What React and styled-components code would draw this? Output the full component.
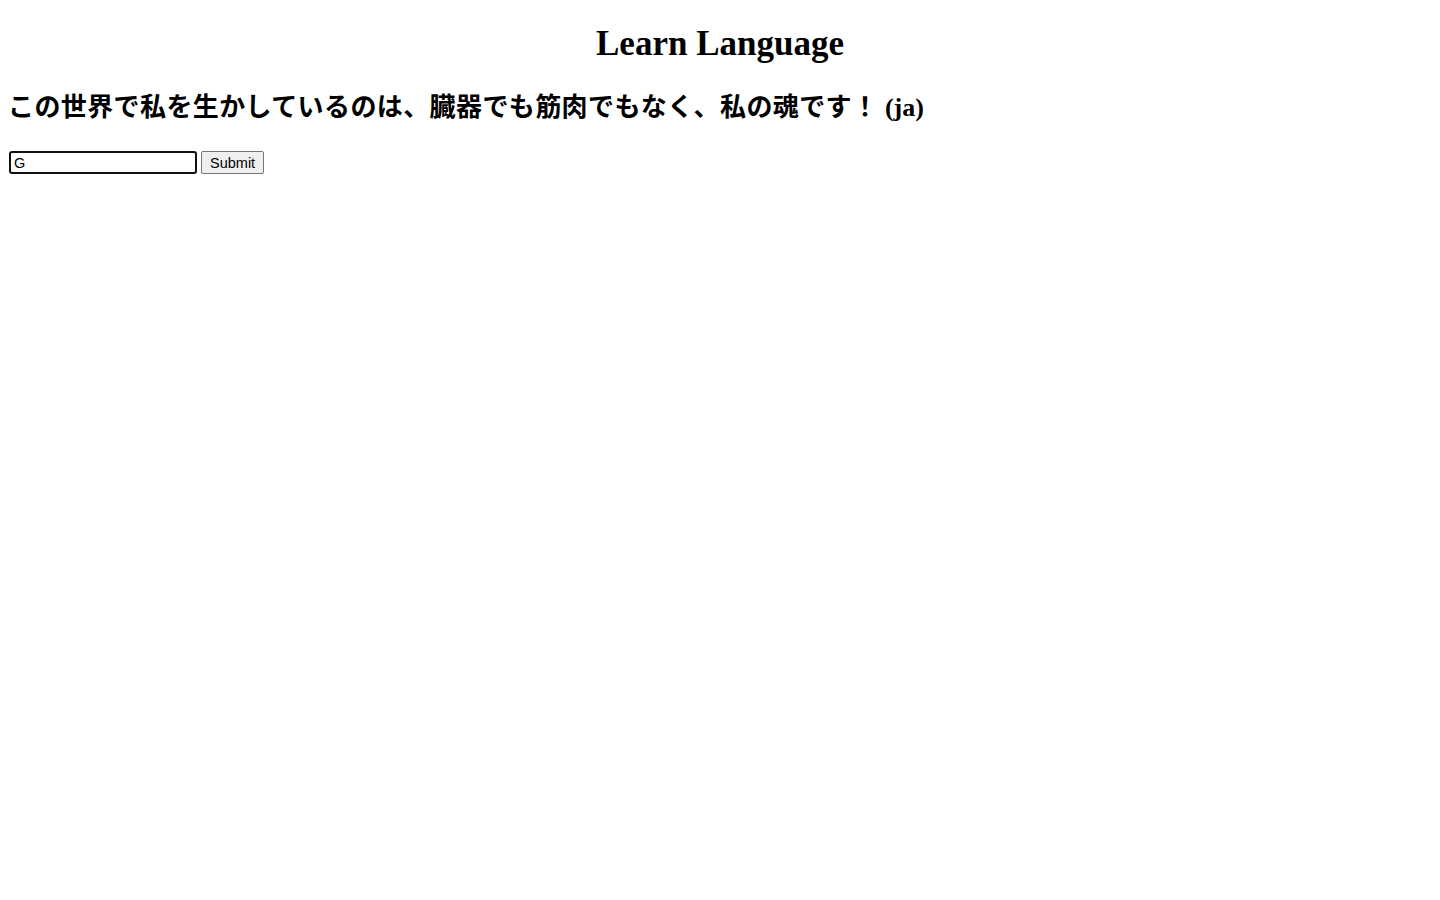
import React from "react";
import styled, { createGlobalStyle } from "styled-components";

const GlobalStyle = createGlobalStyle`
    body {
        margin: 8px;
        background: #ffffff;
        color: #000000;
        font-family: "Liberation Serif", "Noto Sans CJK JP", serif;
    }
`;

const Title = styled.h1`
    text-align: center;
    font-size: 35px;
    font-weight: bold;
    margin: 16px 0 21px;
`;

const Phrase = styled.h2`
    font-size: 26px;
    font-weight: bold;
    margin: 22px 0 28px;
    .jp {
        font-family: "Noto Sans CJK JP", sans-serif;
        letter-spacing: 0.4px;
    }
`;

const AnswerForm = styled.form`
    display: flex;
    align-items: center;
    gap: 4px;
`;

const AnswerInput = styled.input`
    box-sizing: border-box;
    width: 188px;
    height: 23px;
    margin-left: 1px;
    padding: 1px 3px;
    border: 2px solid #101010;
    border-radius: 3px;
    font-family: "Liberation Sans", Arial, sans-serif;
    font-size: 14.5px;
    color: #000;
    outline: none;
`;

const SubmitButton = styled.button`
    box-sizing: border-box;
    height: 23px;
    padding: 1px 8px;
    border: 1px solid #767676;
    border-radius: 2px;
    background: #efefef;
    font-family: "Liberation Sans", Arial, sans-serif;
    font-size: 14.5px;
    color: #000;
`;

const App = () => {
    return (
        <>
            <GlobalStyle />
            <Title>Learn Language</Title>
            <Phrase>
                <span className="jp">この世界で私を生かしているのは、臓器でも筋肉でもなく、私の魂です！</span> (ja)
            </Phrase>
            <AnswerForm onSubmit={(e) => e.preventDefault()}>
                <AnswerInput type="text" defaultValue="G" />
                <SubmitButton type="submit">Submit</SubmitButton>
            </AnswerForm>
        </>
    );
};

export default App;
